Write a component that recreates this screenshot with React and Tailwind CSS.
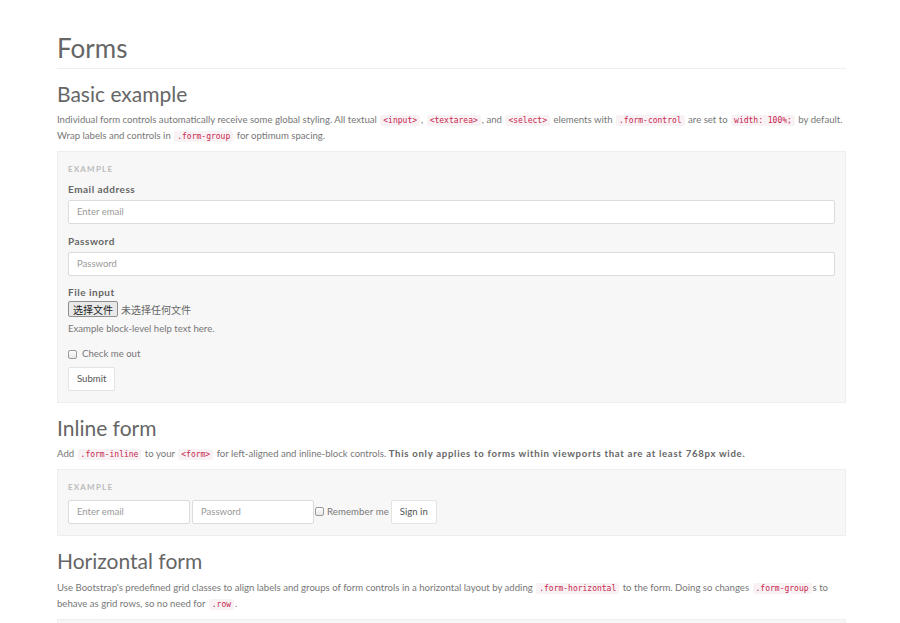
import React from 'react'

const Code = ({ children }) => (
    <code className="font-['DejaVu_Sans_Mono',monospace] text-[8px] leading-none text-[#c7254e] bg-[#f9f2f4] px-[3px] py-[1px] rounded-[2px] mx-[1px]">
        {children}
    </code>
)

const Label = ({ children, className = 'mb-[3px]' }) => (
    <label className={`block text-[10px] font-bold tracking-[0.5px] text-[#666] leading-[15px] ${className}`}>{children}</label>
)

const Input = ({ placeholder, className = '' }) => (
    <div className={`h-[24px] bg-white border border-[#dcdcdc] rounded-[2px] flex items-center px-[8px] text-[9.5px] text-[#999] ${className}`}>
        {placeholder}
    </div>
)

const Checkbox = () => (
    <span className="inline-block w-[9px] h-[9px] border border-[#9a9a9a] rounded-[2px] bg-gradient-to-b from-white to-[#e6e6e6]" />
)

const ExampleTag = () => (
    <div className="text-[8px] font-bold tracking-[1.2px] text-[#bbb] leading-[10px] uppercase">Example</div>
)

export default function App() {
    return (
        <div className="min-h-screen bg-white font-['Lato',sans-serif] text-[#777]">
            <div className="mx-[57px] w-[789px]">
                {/* Page header */}
                <h1 className="pt-[34px] pb-[5px] text-[26px] leading-[29px] text-[#666] border-b border-[#eee]">Forms</h1>

                {/* Basic example */}
                <h2 className="mt-[13px] text-[21px] leading-[23px] text-[#666]">Basic example</h2>
                <p className="mt-[7px] text-[9.6px] leading-[16px]">
                    Individual form controls automatically receive some global styling. All textual <Code>&lt;input&gt;</Code>, <Code>&lt;textarea&gt;</Code>, and <Code>&lt;select&gt;</Code> elements with <Code>.form-control</Code> are set to <Code>width: 100%;</Code> by default. Wrap labels and controls in <Code>.form-group</Code> for optimum spacing.
                </p>
                <div className="mt-[7px] bg-[#f7f7f7] border border-[#eee] px-[10px] pt-[12px] pb-[11px]">
                    <ExampleTag />
                    <div className="mt-[8px]">
                        <Label>Email address</Label>
                        <Input placeholder="Enter email" />
                    </div>
                    <div className="mt-[10px]">
                        <Label>Password</Label>
                        <Input placeholder="Password" />
                    </div>
                    <div className="mt-[9px]">
                        <Label className="mb-[1px]">File input</Label>
                        <div className="flex items-center h-[16px] font-['Noto_Sans_CJK_SC',sans-serif] text-[10px]">
                            <span className="h-[16px] px-[4px] flex items-center bg-[#e9e9e9] border border-[#8f8f8f] rounded-[2px] text-[#222]">选择文件</span>
                            <span className="ml-[3px] text-[#666]">未选择任何文件</span>
                        </div>
                        <div className="mt-[4px] text-[9.6px] leading-[15px] text-[#777]">Example block-level help text here.</div>
                    </div>
                    <div className="mt-[10px] flex items-center gap-[5px] h-[16px] text-[9.6px]">
                        <Checkbox />
                        <span>Check me out</span>
                    </div>
                    <button className="mt-[5px] h-[24px] px-[8px] bg-white border border-[#e3e3e3] rounded-[2px] text-[9.6px] text-[#555]">Submit</button>
                </div>

                {/* Inline form */}
                <h2 className="mt-[13px] text-[21px] leading-[23px] text-[#666]">Inline form</h2>
                <p className="mt-[7px] text-[9.6px] leading-[16px]">
                    Add <Code>.form-inline</Code> to your <Code>&lt;form&gt;</Code> for left-aligned and inline-block controls. <strong className="font-bold tracking-[0.7px] text-[#666]">This only applies to forms within viewports that are at least 768px wide.</strong>
                </p>
                <div className="mt-[7px] bg-[#f7f7f7] border border-[#eee] px-[10px] pt-[12px] pb-[11px]">
                    <ExampleTag />
                    <div className="mt-[8px] flex items-center">
                        <Input placeholder="Enter email" className="w-[122px]" />
                        <Input placeholder="Password" className="w-[122px] ml-[2px]" />
                        <span className="ml-[1px] flex items-center gap-[3px] text-[9.6px] tracking-[0.1px]">
                            <Checkbox />
                            <span>Remember me</span>
                        </span>
                        <button className="ml-[2px] h-[24px] px-[8px] bg-white border border-[#e3e3e3] rounded-[2px] text-[9.6px] text-[#555]">Sign in</button>
                    </div>
                </div>

                {/* Horizontal form */}
                <h2 className="mt-[13px] text-[21px] leading-[23px] text-[#666]">Horizontal form</h2>
                <p className="mt-[8px] text-[9.6px] leading-[16px]">
                    Use Bootstrap's predefined grid classes to align labels and groups of form controls in a horizontal layout by adding <Code>.form-horizontal</Code> to the form. Doing so changes <Code>.form-group</Code>s to behave as grid rows, so no need for <Code>.row</Code>.
                </p>
                <div className="mt-[7px] h-[60px] bg-[#f7f7f7] border border-[#eee]" />
            </div>
        </div>
    )
}
